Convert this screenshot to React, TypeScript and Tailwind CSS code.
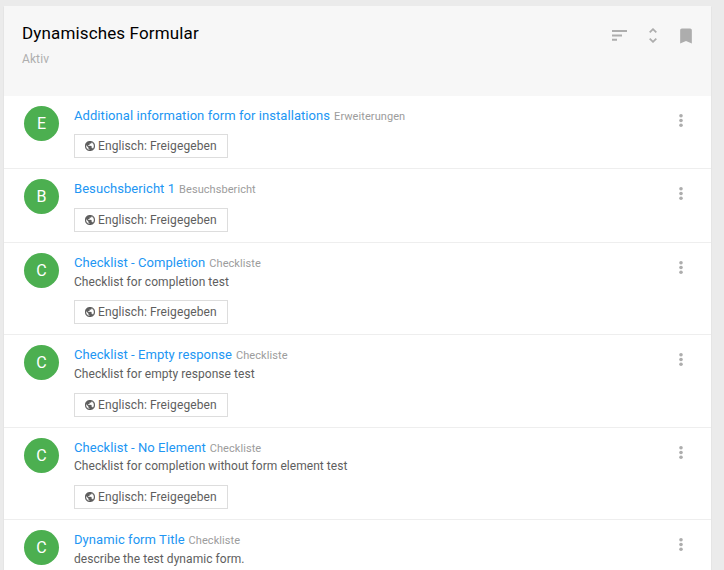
import { MdBookmark } from "react-icons/md";

type Row = {
  letter: string;
  title: string;
  category: string;
  description?: string;
  size: string;
  heading: string;
  badgeGap: string;
};

const rows: Row[] = [
  { letter: "E", title: "Additional information form for installations", category: "Erweiterungen", size: "h-[73px]", heading: "h-[19px]", badgeGap: "mt-[10px]" },
  { letter: "B", title: "Besuchsbericht 1", category: "Besuchsbericht", size: "h-[74px]", heading: "h-[19px]", badgeGap: "mt-[11px]" },
  { letter: "C", title: "Checklist - Completion", category: "Checkliste", description: "Checklist for completion test", size: "h-[92px]", heading: "h-[20px]", badgeGap: "mt-[8px]" },
  { letter: "C", title: "Checklist - Empty response", category: "Checkliste", description: "Checklist for empty response test", size: "h-[93px]", heading: "h-[20px]", badgeGap: "mt-[9px]" },
  { letter: "C", title: "Checklist - No Element", category: "Checkliste", description: "Checklist for completion without form element test", size: "h-[92px]", heading: "h-[19px]", badgeGap: "mt-[9px]" },
  { letter: "C", title: "Dynamic form Title", category: "Checkliste", description: "describe the test dynamic form.", size: "h-[51px]", heading: "h-[20px]", badgeGap: "" },
];

function SortIcon() {
  return (
    <svg className="h-[11px] w-[15px]" viewBox="0 0 15 11" fill="currentColor">
      <path d="M0 .1h15v2H0zM0 4.5h10v2H0zM0 8.8h5v2H0z" />
    </svg>
  );
}

function UnfoldIcon() {
  return (
    <svg className="ml-[22px] h-[15px] w-2" viewBox="0 0 8 15" fill="none" stroke="currentColor" strokeWidth="1.8">
      <path d="M.7 4.4 4 1.2l3.3 3.2M.7 10.6 4 13.8l3.3-3.2" />
    </svg>
  );
}

function GlobeIcon() {
  return (
    <svg className="mr-1 size-[10px] shrink-0" viewBox="2 2 20 20" fill="currentColor" stroke="currentColor" strokeWidth="0.6">
      <path d="M12 2C6.48 2 2 6.48 2 12s4.48 10 10 10 10-4.48 10-10S17.52 2 12 2zm-1 17.93c-3.95-.49-7-3.85-7-7.93 0-.62.08-1.21.21-1.79L9 15v1c0 1.1.9 2 2 2v1.93zm6.9-2.54c-.26-.81-1-1.39-1.9-1.39h-1v-3c0-.55-.45-1-1-1H8v-2h2c.55 0 1-.45 1-1V7h2c1.1 0 2-.9 2-2v-.41c2.93 1.19 5 4.06 5 7.41 0 2.08-.8 3.97-2.1 5.39z" />
    </svg>
  );
}

function MoreIcon() {
  return (
    <svg className="h-[13px] w-1 shrink-0" viewBox="0 0 4 13" fill="currentColor">
      <circle cx="2" cy="1.8" r="1.8" />
      <circle cx="2" cy="6.5" r="1.8" />
      <circle cx="2" cy="11.2" r="1.8" />
    </svg>
  );
}

function ListRow({ row }: { row: Row }) {
  return (
    <li className={`flex shrink-0 border-b border-[#eeeeee] pl-5 pr-7 pt-[9px] ${row.size}`}>
      <div className="mt-px flex size-[35px] shrink-0 items-center justify-center rounded-full bg-[#4caf50] text-[16px] text-white">
        {row.letter}
      </div>
      <div className="ml-[15px] min-w-0 flex-1">
        <div className={`whitespace-nowrap leading-[19px] ${row.heading}`}>
          <a className="text-[13px] tracking-[0.065px] text-[#2196f3]">{row.title}</a>{" "}
          <small className="text-[11px] tracking-[0.07px] text-[#9c9c9c]">{row.category}</small>
        </div>
        {row.description && (
          <p className="h-5 whitespace-nowrap text-[12px] leading-[21px] tracking-[0.05px] text-[#5e5e5e]">{row.description}</p>
        )}
        {row.badgeGap && (
          <div className={`flex h-6 w-[154px] items-center border border-[#dddddd] pl-[10px] text-[12px] text-[#5e5e5e] ${row.badgeGap}`}>
            <GlobeIcon />
            <span className="-ml-px whitespace-nowrap tracking-[0.1px]">Englisch: Freigegeben</span>
          </div>
        )}
      </div>
      <button className="mt-[9px] flex h-[13px] w-1 items-center justify-center text-[#adadad]">
        <MoreIcon />
      </button>
    </li>
  );
}

export default function App() {
  return (
    <div className="h-[570px] w-[724px] overflow-hidden bg-[#ebebeb] pl-1 pt-[6px] font-['Roboto',sans-serif]">
      <main className="flex w-[707px] flex-col bg-white shadow-[0_1px_1px_rgba(0,0,0,0.15)]">
        <header className="flex h-[90px] shrink-0 justify-between bg-[#f7f7f7] pl-[18px] pr-[15px] pt-[17px]">
          <div>
            <h2 className="h-5 whitespace-nowrap text-[17px] leading-5 tracking-[0.14px] text-black">Dynamisches Formular</h2>
            <small className="mt-[7px] block text-[12px] leading-[18px] tracking-[0.1px] text-[#aeaeae]">Aktiv</small>
          </div>
          <div className="mt-[2px] flex h-[21px] items-center text-[#adadad]">
            <SortIcon />
            <UnfoldIcon />
            <MdBookmark className="ml-[19px] size-5" />
          </div>
        </header>
        <ul>
          {rows.map((row) => (
            <ListRow key={row.title} row={row} />
          ))}
        </ul>
      </main>
    </div>
  );
}
